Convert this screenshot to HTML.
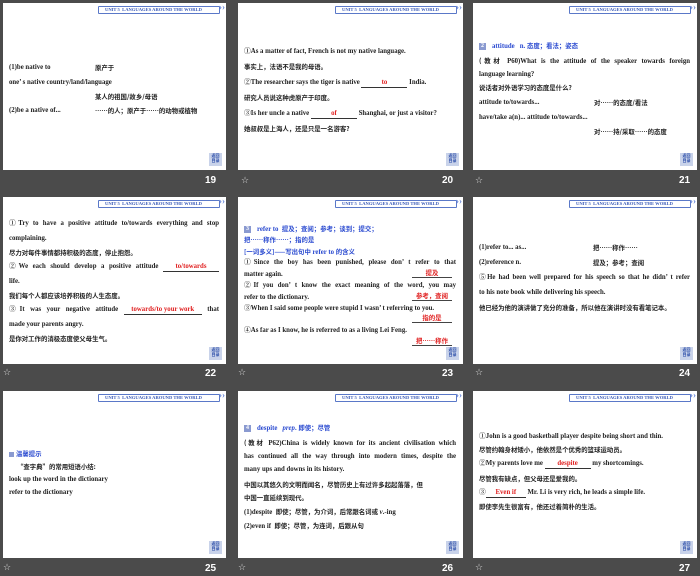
<!DOCTYPE html>
<html><head><meta charset="utf-8"><style>
*{margin:0;padding:0;box-sizing:border-box}
body{width:700px;height:576px;background:#4b4b4b;position:relative;overflow:hidden;font-family:"Liberation Serif","Noto Serif CJK SC","Noto Sans CJK SC",serif}
.s{position:absolute;background:#fff;overflow:hidden;height:167px}
.hd{position:absolute;top:3px;right:6px;width:122px;height:8px;border:1px solid #5a78c8;border-radius:1px;font:bold 4.6px "Liberation Serif",serif;color:#3a5ab8;line-height:6px;padding-left:6px;white-space:nowrap}
.hd:after{content:"››";position:absolute;right:-6px;top:-3px;font-size:9px;color:#6a88d8}
.bk{position:absolute;right:4px;bottom:4px;width:13px;height:13px;background:#c9d3ea;color:#2a4ca8;font:bold 4px "Noto Sans CJK SC",sans-serif;line-height:5px;text-align:center;padding-top:1px}
.l{position:absolute;left:6px;right:7px;white-space:nowrap;font-size:6.8px;font-weight:bold;color:#222;line-height:9px}
.j{text-align:justify;text-align-last:justify}
.cn{font-family:"Noto Sans CJK SC",sans-serif;font-size:6.4px}
.b{color:#2a4ad0}
.r{color:#e02020}
.u{display:inline-block;border-bottom:1px solid #333;text-align:center;text-align-last:center;line-height:8px;white-space:nowrap}
.ic{display:inline-block;width:7px;height:7px;background:#8a9ad0;color:#fff;font-size:6px;line-height:7px;text-align:center;margin-right:6px;vertical-align:middle}
.n{position:absolute;color:#fff;font:bold 10px "Liberation Sans",sans-serif}
.st{position:absolute;color:#ddd;font:9px "DejaVu Sans",sans-serif}
.a{position:absolute;left:174px;width:40px;right:auto;border-bottom:1px solid #444;text-align:center}
</style></head><body>

<!-- 19 -->
<div class="s" style="left:3px;top:3px;width:223px">
<div class="hd">UNIT 5 &nbsp;LANGUAGES AROUND THE WORLD</div>
<div class="l" style="top:60px">(1)be native to<span class="cn" style="position:absolute;left:86px">原产于</span></div>
<div class="l" style="top:75px">one’ s native country/land/language</div>
<div class="l cn" style="top:89px;left:92px">某人的祖国/故乡/母语</div>
<div class="l" style="top:103px">(2)be a native of...<span class="cn" style="position:absolute;left:86px">……的人；原产于……的动物或植物</span></div>
<div class="bk">返回<br>目录</div></div>
<div class="n" style="left:205px;top:175px">19</div>

<!-- 20 -->
<div class="s" style="left:238px;top:3px;width:225px">
<div class="hd">UNIT 5 &nbsp;LANGUAGES AROUND THE WORLD</div>
<div class="l" style="top:44px">①As a matter of fact, French is not my native language.</div>
<div class="l cn" style="top:59px">事实上，法语不是我的母语。</div>
<div class="l" style="top:75px">②The researcher says the tiger is native <span class="u r" style="width:46px">to</span> India.</div>
<div class="l cn" style="top:90px">研究人员说这种虎原产于印度。</div>
<div class="l" style="top:106px">③Is her uncle a native <span class="u r" style="width:46px">of</span> Shanghai, or just a visitor?</div>
<div class="l cn" style="top:121px">她叔叔是上海人，还是只是一名游客?</div>
<div class="bk">返回<br>目录</div></div>
<div class="st" style="left:241px;top:176px">☆</div>
<div class="n" style="left:442px;top:175px">20</div>

<!-- 21 -->
<div class="s" style="left:473px;top:3px;width:224px">
<div class="hd">UNIT 5 &nbsp;LANGUAGES AROUND THE WORLD</div>
<div class="l b" style="top:38px"><span class="ic">2</span>attitude &nbsp; n. <span class="cn">态度；看法；姿态</span></div>
<div class="l j" style="top:53px"><span class="cn">(教材</span> P60)What is the attitude of the speaker towards foreign</div>
<div class="l" style="top:67px">language learning?</div>
<div class="l cn" style="top:80px">说话者对外语学习的态度是什么?</div>
<div class="l" style="top:95px">attitude to/towards...<span class="cn" style="position:absolute;left:115px">对……的态度/看法</span></div>
<div class="l" style="top:110px">have/take a(n)... attitude to/towards...</div>
<div class="l cn" style="top:124px;left:121px">对……持/采取……的态度</div>
<div class="bk">返回<br>目录</div></div>
<div class="st" style="left:475px;top:176px">☆</div>
<div class="n" style="left:679px;top:175px">21</div>

<!-- 22 -->
<div class="s" style="left:3px;top:197px;width:223px">
<div class="hd">UNIT 5 &nbsp;LANGUAGES AROUND THE WORLD</div>
<div class="l j" style="top:22px">①Try to have a positive attitude to/towards everything and stop</div>
<div class="l" style="top:37px">complaining.</div>
<div class="l cn" style="top:51px">尽力对每件事情都持积极的态度，停止抱怨。</div>
<div class="l j" style="top:65px">②We each should develop a positive attitude <span class="u r" style="width:56px">to/towards</span></div>
<div class="l" style="top:80px">life.</div>
<div class="l cn" style="top:94px">我们每个人都应该培养积极的人生态度。</div>
<div class="l j" style="top:108px">③It was your negative attitude <span class="u r" style="width:78px">towards/to your work</span> that</div>
<div class="l" style="top:123px">made your parents angry.</div>
<div class="l cn" style="top:137px">是你对工作的消极态度使父母生气。</div>
<div class="bk">返回<br>目录</div></div>
<div class="st" style="left:3px;top:368px">☆</div>
<div class="n" style="left:205px;top:368px">22</div>

<!-- 23 -->
<div class="s" style="left:238px;top:197px;width:225px">
<div class="hd">UNIT 5 &nbsp;LANGUAGES AROUND THE WORLD</div>
<div class="l b" style="top:27px"><span class="ic">3</span>refer to &nbsp;<span class="cn">提及；查阅；参考；谈到；提交；</span></div>
<div class="l b cn" style="top:38px">把……称作……；指的是</div>
<div class="l b" style="top:50px"><span class="cn">[一词多义]——写出句中</span> refer to <span class="cn">的含义</span></div>
<div class="l j" style="top:61px">①Since the boy has been punished, please don’ t refer to that</div>
<div class="l" style="top:73px">matter again.</div>
<div class="l cn r a" style="top:71px">提及</div>
<div class="l j" style="top:84px">②If you don’ t know the exact meaning of the word, you may</div>
<div class="l" style="top:96px">refer to the dictionary.</div>
<div class="l cn r a" style="top:94px">参考，查阅</div>
<div class="l" style="top:107px">③When I said some people were stupid I wasn’ t referring to you.</div>
<div class="l cn r a" style="top:116px">指的是</div>
<div class="l" style="top:129px">④As far as I know, he is referred to as a living Lei Feng.</div>
<div class="l cn r a" style="top:139px">把……称作</div>
<div class="bk">返回<br>目录</div></div>
<div class="st" style="left:238px;top:368px">☆</div>
<div class="n" style="left:442px;top:368px">23</div>

<!-- 24 -->
<div class="s" style="left:473px;top:197px;width:224px">
<div class="hd">UNIT 5 &nbsp;LANGUAGES AROUND THE WORLD</div>
<div class="l" style="top:46px">(1)refer to... as...<span class="cn" style="position:absolute;left:114px">把……称作……</span></div>
<div class="l" style="top:61px">(2)reference n.<span class="cn" style="position:absolute;left:114px">提及；参考；查阅</span></div>
<div class="l j" style="top:76px">⑤He had been well prepared for his speech so that he didn’ t refer</div>
<div class="l" style="top:91px">to his note book while delivering his speech.</div>
<div class="l cn" style="top:106px">他已经为他的演讲做了充分的准备，所以他在演讲时没有看笔记本。</div>
<div class="bk">返回<br>目录</div></div>
<div class="st" style="left:475px;top:368px">☆</div>
<div class="n" style="left:679px;top:368px">24</div>

<!-- 25 -->
<div class="s" style="left:3px;top:391px;width:223px">
<div class="hd">UNIT 5 &nbsp;LANGUAGES AROUND THE WORLD</div>
<div class="l cn" style="top:58px;color:#2a4ad0"><span class="ic" style="width:5px;height:5px;margin-right:2px"></span>温馨提示</div>
<div class="l cn" style="top:71px;left:14px">“查字典”的常用短语小结:</div>
<div class="l" style="top:84px">look up the word in the dictionary</div>
<div class="l" style="top:97px">refer to the dictionary</div>
<div class="bk">返回<br>目录</div></div>
<div class="st" style="left:3px;top:563px">☆</div>
<div class="n" style="left:205px;top:563px">25</div>

<!-- 26 -->
<div class="s" style="left:238px;top:391px;width:225px">
<div class="hd">UNIT 5 &nbsp;LANGUAGES AROUND THE WORLD</div>
<div class="l b" style="top:32px"><span class="ic">4</span>despite &nbsp; <i>prep</i>. <span class="cn">即使；尽管</span></div>
<div class="l j" style="top:47px"><span class="cn">(教材</span> P62)China is widely known for its ancient civilisation which</div>
<div class="l j" style="top:61px">has continued all the way through into modern times, despite the</div>
<div class="l" style="top:74px">many ups and downs in its history.</div>
<div class="l cn" style="top:89px">中国以其悠久的文明而闻名，尽管历史上有过许多起起落落，但</div>
<div class="l cn" style="top:102px">中国一直延续到现代。</div>
<div class="l" style="top:116px">(1)despite &nbsp;<span class="cn">即使；尽管，为介词，后常跟名词或</span> <i>v</i>.-ing</div>
<div class="l" style="top:130px">(2)even if &nbsp;<span class="cn">即使；尽管，为连词，后跟从句</span></div>
<div class="bk">返回<br>目录</div></div>
<div class="st" style="left:238px;top:563px">☆</div>
<div class="n" style="left:442px;top:563px">26</div>

<!-- 27 -->
<div class="s" style="left:473px;top:391px;width:224px">
<div class="hd">UNIT 5 &nbsp;LANGUAGES AROUND THE WORLD</div>
<div class="l" style="top:41px">①John is a good basketball player despite being short and thin.</div>
<div class="l cn" style="top:54px">尽管约翰身材矮小，他依然是个优秀的篮球运动员。</div>
<div class="l" style="top:68px">②My parents love me <span class="u r" style="width:46px">despite</span> my shortcomings.</div>
<div class="l cn" style="top:83px">尽管我有缺点，但父母还是爱我的。</div>
<div class="l" style="top:97px">③<span class="u r" style="width:40px">Even if</span> Mr. Li is very rich, he leads a simple life.</div>
<div class="l cn" style="top:111px">即使李先生很富有，他还过着简朴的生活。</div>
<div class="bk">返回<br>目录</div></div>
<div class="st" style="left:475px;top:563px">☆</div>
<div class="n" style="left:679px;top:563px">27</div>

</body></html>
